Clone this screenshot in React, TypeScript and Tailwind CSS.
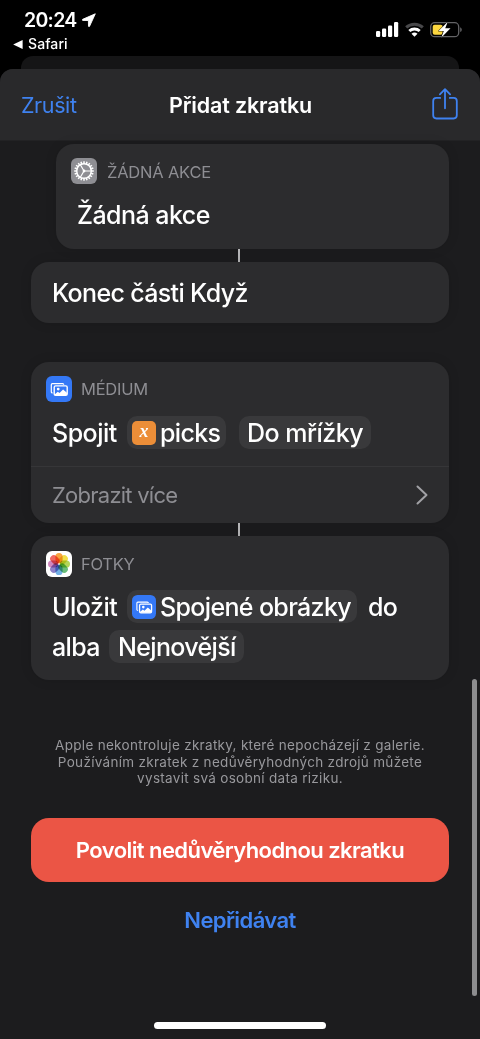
import { type FC, type ReactNode } from 'react';

interface IWithChildren {
  children: ReactNode
  className?: string
}

const teeth = Array.from({length: 20}, (_, index) => index * 18)

const petals = [
  {color: '#f7941e', angle: 0},
  {color: '#f0d92a', angle: 45},
  {color: '#a5cf3c', angle: 90},
  {color: '#4fb262', angle: 135},
  {color: '#5ba3e0', angle: 180},
  {color: '#7a6cc0', angle: 225},
  {color: '#c873b4', angle: 270},
  {color: '#ee4f45', angle: 315},
]

const GearIcon: FC = () => (
  <svg className="size-[26px] shrink-0" viewBox="0 0 26 26" fill="none" stroke="#fff">
    <rect width="26" height="26" rx="6" fill="#8e8e93" stroke="none"/>
    {teeth.map(angle => (
      <path key={angle} d="M13 3.2V5.6" strokeWidth="1.5" transform={`rotate(${angle} 13 13)`}/>
    ))}
    <circle cx="13" cy="13" r="7.3" strokeWidth="1.5"/>
    <circle cx="13" cy="13" r="1.4" fill="#fff" stroke="none"/>
    <path d="M13 13H20M13 13L9.5 7M13 13L9.5 19" strokeWidth="1.2"/>
  </svg>
)

const MediaIcon: FC<{ className: string }> = ({className}) => (
  <svg className={className} viewBox="0 0 26 26" fill="none">
    <rect width="26" height="26" rx="6" fill="#3478f6"/>
    <path d="M6.6 16.8H6.4a1.1 1.1 0 0 1-1.1-1.1V8.8a1.1 1.1 0 0 1 1.1-1.1h10.2a1.1 1.1 0 0 1 1.1 1.1" stroke="#fff" strokeWidth="1.2"/>
    <rect x="8.2" y="9.9" width="13" height="9.5" rx="1.4" fill="#3478f6" stroke="#fff" strokeWidth="1.4"/>
    <circle cx="12.2" cy="13.1" r="1.4" fill="#fff"/>
    <path d="M8.8 18.2l3-2.4 1.7 1.2 3.6-3.5 3.8 3.2v2.4H8.8z" fill="#fff"/>
  </svg>
)

const PhotosIcon: FC = () => (
  <svg className="size-[26px] shrink-0" viewBox="0 0 26 26">
    <rect width="26" height="26" rx="6" fill="#fff"/>
    <g className="isolate">
      {petals.map(({color, angle}) => (
        <rect
          key={angle}
          className="mix-blend-multiply"
          x="9.4"
          y="2"
          width="7.2"
          height="10.2"
          rx="3.6"
          fill={color}
          fillOpacity="0.85"
          transform={`rotate(${angle} 13 13)`}
        />
      ))}
    </g>
  </svg>
)

const ShareIcon: FC = () => (
  <svg className="h-8 w-[26px]" viewBox="0 0 26 32" fill="none" stroke="#3f82f0" strokeWidth="1.8" strokeLinecap="round" strokeLinejoin="round">
    <path d="M8.2 9.9H4.4a3.2 3.2 0 0 0-3.2 3.2v14.2a3.2 3.2 0 0 0 3.2 3.2h17.2a3.2 3.2 0 0 0 3.2-3.2V13.1a3.2 3.2 0 0 0-3.2-3.2H17.8"/>
    <path d="M13 20.3V1.4M7.9 6.3L13 1.2l5.1 5.1"/>
  </svg>
)

const StatusBar: FC = () => (
  <div className="flex h-14 justify-between">
    <div className="pl-[13px] pt-[9px]">
      <div className="flex items-center pl-[11px]">
        <span className="w-[58px] text-[19.5px] font-semibold leading-[22px] tracking-[-0.7px]">20:24</span>
        <svg className="size-[14px]" viewBox="0 0 14 14" fill="#fff">
          <path d="M13.3.8L.7 6.3c-.7.3-.5 1.1.2 1.1l5.5.1.1 5.5c0 .8.8.9 1.1.2z" stroke="#fff" strokeWidth=".9" strokeLinejoin="round"/>
        </svg>
      </div>
      <div className="mt-[4px] flex items-center gap-[5px]">
        <svg className="h-[9px] w-[10px]" viewBox="0 0 10 9" fill="#fff">
          <path d="M.2 4.5L9.6 0v9z"/>
        </svg>
        <span className="text-[14px] font-medium leading-[18px] tracking-[0.1px]">Safari</span>
      </div>
    </div>
    <div className="flex h-[38px] items-end pr-[18px] pt-5">
      <svg className="h-[18px] w-[86px]" viewBox="0 0 86 18">
        <g fill="#fff">
          <rect x="0" y="11" width="4.2" height="6" rx="1.2"/>
          <rect x="6" y="8.5" width="4.2" height="8.5" rx="1.2"/>
          <rect x="12" y="5.5" width="4.2" height="11.5" rx="1.2"/>
          <rect x="18" y="2" width="4.2" height="15" rx="1.2"/>
        </g>
        <g fill="none">
          <path d="M30.2 7.4a12.2 12.2 0 0 1 16.6 0" stroke="#48484a" strokeWidth="3"/>
          <path d="M33.3 11a7.6 7.6 0 0 1 10.4 0" stroke="#fff" strokeWidth="2.9"/>
        </g>
        <path d="M38.5 16.8l-3-3a4.4 4.4 0 0 1 6 0z" fill="#fff"/>
        <rect x="54.7" y="2.7" width="28" height="14" rx="4" fill="none" stroke="#636366" strokeWidth="1.3"/>
        <path d="M84.2 7.3a2.6 2.6 0 0 1 0 4.8z" fill="#636366"/>
        <rect x="56.7" y="4.7" width="10" height="10" rx="2" fill="#fbd63f"/>
        <path d="M71.8 1.8L62.6 10.9h5.2l-2.6 6.8 9.3-9.4h-5.3z" fill="#fff" stroke="#000" strokeWidth="1" paintOrder="stroke"/>
      </svg>
    </div>
  </div>
)

const Card: FC<IWithChildren> = ({children, className = ''}) => (
  <section className={`rounded-[18px] bg-[#2c2c2e] shadow-[0_0_12px_rgba(0,0,0,0.12)] ${className}`}>{children}</section>
)

const CardTitle: FC<{ icon: ReactNode, children: ReactNode }> = ({icon, children}) => (
  <div className="flex items-center gap-[9px] pl-[15px]">
    {icon}
    <span className="text-[16.5px] leading-[26px] tracking-[-0.25px] text-[#8e8e93]">{children}</span>
  </div>
)

const ActionRow: FC<IWithChildren> = ({children, className = ''}) => (
  <div className={`flex h-[33px] items-center whitespace-nowrap pl-[21px] text-[25px] font-medium leading-[33px] tracking-[-0.65px] ${className}`}>{children}</div>
)

const Chip: FC<IWithChildren> = ({children, className = ''}) => (
  <span className={`flex h-[33px] items-center rounded-[10px] bg-[#39393b] ${className}`}>{children}</span>
)

const Connector: FC = () => <div className="mx-auto h-[14px] w-[1.5px] bg-[#b5b5b7]"/>

const App: FC = () => {
  return (
    <div className="relative flex h-[1039px] w-[480px] flex-col overflow-hidden bg-black font-[Inter,sans-serif] text-white">
      <StatusBar/>
      <div className="mx-[21px] h-[13px] shrink-0 rounded-t-[12px] bg-[#151516]"/>

      <div className="flex-1 rounded-t-[13px] bg-[#1c1c1e]">
        <header className="flex h-[72px] items-center justify-between rounded-t-[13px] border-b border-[#222224] bg-[#29292b] pl-[21px] pr-[22px] pt-[2px]">
          <button className="w-[99px] text-left text-[21.5px] tracking-[-0.4px] text-[#3f82f0]">Zrušit</button>
          <h1 className="ml-[3px] text-[21.5px] font-semibold tracking-[-0.15px]">Přidat zkratku</h1>
          <div className="flex w-[100px] justify-end pb-[3px]"><ShareIcon/></div>
        </header>

        <main className="px-[31px] pt-[3px]">
          <Card className="ml-[25px] h-[105px] pt-[14px]">
            <CardTitle icon={<GearIcon/>}><span className="relative left-px top-px tracking-[-0.2px]">ŽÁDNÁ AKCE</span></CardTitle>
            <ActionRow className="mt-[15px]"><span className="tracking-[-0.55px]">Žádná akce</span></ActionRow>
          </Card>
          <div className="pr-[2px]"><Connector/></div>
          <Card className="-mt-px flex h-[61px] items-center pt-[2px]">
            <ActionRow>Konec části Když</ActionRow>
          </Card>

          <Card className="mt-[39px] h-[161px] pt-[14px]">
            <CardTitle icon={<MediaIcon className="size-[26px] shrink-0"/>}>MÉDIUM</CardTitle>
            <ActionRow className="mt-[14px]">
              <span className="w-[75px] pt-[2px] tracking-[-0.5px]">Spojit</span>
              <Chip className="w-[99px] gap-[4px] pl-[5px]">
                <span className="flex size-[24px] items-center justify-center rounded-[5px] bg-[#ec8e38] pb-[3px] font-['Liberation_Serif',serif] text-[18px] font-bold italic leading-none tracking-normal">x</span>
                <span className="pt-[2px]">picks</span>
              </Chip>
              <Chip className="ml-[13px] w-[132px] pl-[8px]"><span className="pt-[2px] tracking-[-0.5px]">Do mřížky</span></Chip>
            </ActionRow>
            <div className="mt-[17px] flex h-[57px] items-center justify-between border-t border-[#363638] pl-[21px] pr-[21px]">
              <span className="text-[22px] tracking-[-0.75px] text-[#8e8e93]">Zobrazit více</span>
              <svg className="h-5 w-3" viewBox="0 0 12 20" fill="none" stroke="#a1a1a5" strokeWidth="2" strokeLinecap="round" strokeLinejoin="round">
                <path d="M1.5 1.5L10.5 10l-9 8.5"/>
              </svg>
            </div>
          </Card>
          <div className="pr-[2px]"><Connector/></div>
          <Card className="-mt-px h-[144px] pt-[15px]">
            <CardTitle icon={<PhotosIcon/>}>FOTKY</CardTitle>
            <ActionRow className="mt-[13px]">
              <span className="w-[75px] pt-[2px] tracking-[-0.5px]">Uložit</span>
              <Chip className="w-[230px] gap-[4px] pl-[5px]">
                <MediaIcon className="size-[24px] shrink-0"/>
                <span className="pt-[2px]">Spojené obrázky</span>
              </Chip>
              <span className="ml-[11px] pt-[2px]">do</span>
            </ActionRow>
            <ActionRow className="mt-[7px]">
              <span className="w-[57px] pt-[2px]">alba</span>
              <Chip className="w-[135px] pl-[9px]"><span className="pt-[2px]">Nejnovější</span></Chip>
            </ActionRow>
          </Card>

          <p className="mt-[57px] whitespace-nowrap text-center text-[13.5px] leading-[16.7px] tracking-[0.3px] text-[#98989c]">
            Apple nekontroluje zkratky, které nepocházejí z galerie.<br/>
            Používáním zkratek z nedůvěryhodných zdrojů můžete<br/>
            vystavit svá osobní data riziku.
          </p>

          <button className="mt-[31px] flex h-[64px] w-full items-center justify-center rounded-[18px] bg-[#eb5545] text-[22px] font-semibold tracking-[-0.57px]">
            Povolit nedůvěryhodnou zkratku
          </button>
          <button className="mt-[22px] block w-full text-center text-[22px] font-semibold leading-[33px] tracking-[-0.6px] text-[#3f82f0]">Nepřidávat</button>
        </main>
      </div>

      {/* scroll indicator and home bar float over the sheet */}
      <div className="absolute left-[472px] top-[679px] h-[317px] w-[5px] rounded-full bg-[#8d8d8f]"/>
      <div className="absolute left-[154px] top-[1022px] h-[7px] w-[172px] rounded-full bg-white"/>
    </div>
  );
};

export default App
